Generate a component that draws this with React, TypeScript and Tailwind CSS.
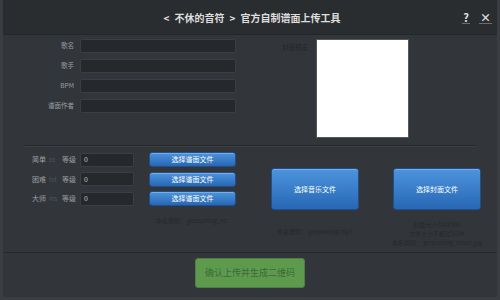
import React from "react";

const font = { fontFamily: '"Noto Sans CJK SC", "Noto Sans", sans-serif' };

const fields = ["歌名", "歌手", "BPM", "谱面作者"];
const levels = [
  { name: "简单", code: "ez" },
  { name: "困难", code: "hd" },
  { name: "大师", code: "ms" },
];

function BlueButton({ label, className }: { label: string; className: string }) {
  return (
    <div
      className={`flex items-center justify-center rounded-[3px] border border-[#1f4f8c] bg-gradient-to-b from-[#4d94dc] to-[#2767b5] text-white shadow-[inset_0_1px_0_rgba(255,255,255,0.25)] ${className}`}
    >
      {label}
    </div>
  );
}

export default function App() {
  return (
    <div
      className="flex h-[300px] w-[500px] flex-col overflow-hidden border-x-[3px] border-b-[3px] border-[#3a3e42] bg-[#32363a] text-[#9a9ea3]"
      style={font}
    >
      {/* title bar */}
      <div className="grid h-[35px] shrink-0 grid-cols-[1fr_auto_1fr] items-center border-b border-[#24272a] bg-[#2a2d30]">
        <div />
        <div className="flex items-center gap-[5px] pl-[4px] text-[10px] font-bold text-[#dedede]">
          <span>&lt;</span>
          <span>不休的音符</span>
          <span>&gt;</span>
          <span>官方自制谱面上传工具</span>
        </div>
        <div className="flex justify-end gap-[9px] pr-[5px] text-[11px] font-bold text-[#e4e4e4]">
          <span className="border-b border-[#6a6e72] px-[1px] leading-[12px]">?</span>
          <span className="border-b border-[#6a6e72] px-[1px] leading-[12px]">×</span>
        </div>
      </div>

      {/* song info + preview */}
      <div className="flex h-[110px] shrink-0 pt-[4px]">
        <div className="flex flex-col gap-[6px]">
          {fields.map((f) => (
            <div key={f} className="flex items-center gap-[6px]">
              <span className="w-[71px] text-right text-[6.5px]">{f}</span>
              <div className="h-[14px] w-[156px] rounded-[2px] border border-[#3b3f43] bg-[#26292c]" />
            </div>
          ))}
        </div>
        <div className="ml-[46px] pt-[4px] text-[6.5px] text-[#232629]">封面预览</div>
        <div className="ml-[8px] h-[99px] w-[93px] border border-[#55595c] bg-white" />
      </div>

      <div className="mx-[22px] h-px shrink-0 bg-[#26292c] shadow-[0_1px_0_#3c4044]" />

      {/* difficulty + files */}
      <div className="flex h-[106px] shrink-0 pt-[6px]">
        <div className="ml-[27px] flex flex-col">
          <div className="flex flex-col gap-[4.5px]">
            {levels.map((l) => (
              <div key={l.code} className="flex h-[15px] items-center text-[7px]">
                <span className="w-[2px]" />
                <span>{l.name}</span>
                <span className="ml-[3px] w-[13px] text-[6px] text-[#50555a]">{l.code}</span>
                <span>等级</span>
                <div className="ml-[4px] flex h-[14px] w-[54px] items-center rounded-[2px] border border-[#3b3f43] bg-[#26292c] pl-[3px] text-[7px] text-[#c8c8c8]">
                  0
                </div>
                <BlueButton label="选择谱面文件" className="ml-[15px] h-[15px] w-[87px] text-[7px]" />
              </div>
            ))}
          </div>
          <div className="ml-[126px] mt-[10px] text-[6px] text-[#25282b]">命名规则： geqiuming_ez</div>
        </div>

        <div className="ml-[35px] flex w-[88px] flex-col items-center pt-[16px]">
          <BlueButton label="选择音乐文件" className="h-[42px] w-[88px] text-[7px]" />
          <div className="mt-[17px] whitespace-nowrap text-[6px] text-[#25282b]">命名规则： geqiuming.mp3</div>
        </div>

        <div className="ml-[34px] flex w-[88px] flex-col items-center pt-[16px]">
          <BlueButton label="选择封面文件" className="h-[42px] w-[88px] text-[7px]" />
          <div className="mt-[10px] flex flex-col items-center whitespace-nowrap text-[6px] leading-[9px] text-[#25282b]">
            <span>封面大小300X300</span>
            <span>文件大小不超过100K</span>
            <span>命名规则： geqiuming_cover.jpg</span>
          </div>
        </div>
      </div>

      <div className="h-px shrink-0 bg-[#26292c]" />

      {/* confirm */}
      <div className="flex flex-1 justify-center pt-[5px]">
        <div className="flex h-[30px] w-[110px] items-center justify-center rounded-[3px] border border-[#4c8140] bg-[#5e9a4e] text-[9px] text-[#3d6934]">
          确认上传并生成二维码
        </div>
      </div>
    </div>
  );
}
